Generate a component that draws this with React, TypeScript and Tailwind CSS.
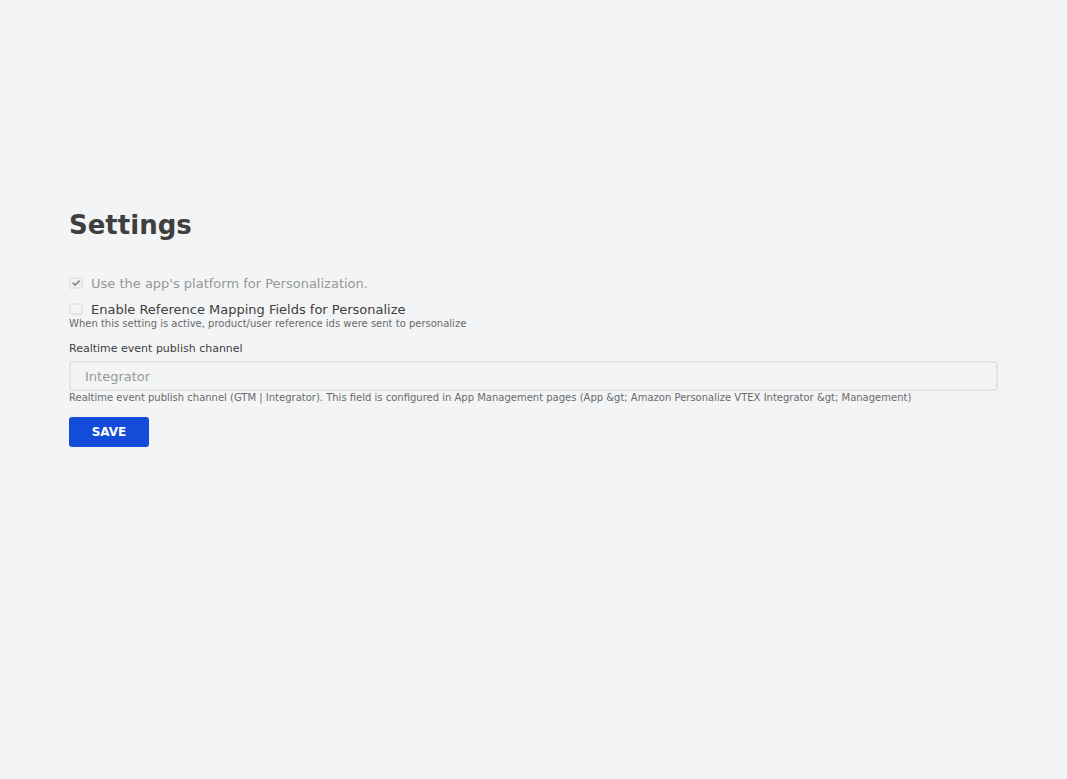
import { useState } from "react";

export default function App() {
  const [mapping, setMapping] = useState(false);
  return (
    <main className="min-h-screen bg-[#f2f4f5] px-[69px] pt-[205px] pb-16 font-['DejaVu_Sans',sans-serif] text-[#3f3f40]">
      <h1 className="text-[26px] leading-10 font-bold">Settings</h1>
      <form className="mt-8 flex flex-col items-start" onSubmit={(e) => e.preventDefault()}>
        <label className="flex h-[14px] items-start gap-2 text-[13px] leading-[14px] text-[#979899]">
          <span className="grid h-3 w-[14px]">
            <input type="checkbox" checked disabled readOnly className="col-start-1 row-start-1 h-3 w-[14px] appearance-none rounded-xs border-2 border-[#e3e4e6]" />
            <svg viewBox="0 0 14 12" className="col-start-1 row-start-1 h-3 w-[14px]" fill="none" stroke="#8b8c8d" strokeWidth="1.7"><path d="M3.6 5.7 L6 8 L10.7 3.7" /></svg>
          </span>
          Use the app's platform for Personalization.
        </label>
        <label className="mt-3 flex h-[14px] items-start gap-2 text-[13px] leading-[14px]">
          <input type="checkbox" checked={mapping} onChange={(e) => setMapping(e.target.checked)} className="h-3 w-[14px] appearance-none rounded-xs border-2 border-[#e3e4e6] checked:bg-[#134cd8]" />
          Enable Reference Mapping Fields for Personalize
        </label>
        <p className="text-[10px] leading-[14px] text-[#6a6a6b]">When this setting is active, product/user reference ids were sent to personalize</p>
        <label htmlFor="channel" className="mt-2.5 text-[11px] leading-4">Realtime event publish channel</label>
        <input id="channel" disabled value="Integrator" readOnly className="mt-1 h-[30px] w-full rounded-sm border-2 border-[#e3e4e6] px-[14px] text-[13px] text-[#979899]" />
        <p className="text-[10px] leading-[14px] text-[#6a6a6b]">{"Realtime event publish channel (GTM | Integrator). This field is configured in App Management pages (App &gt; Amazon Personalize VTEX Integrator &gt; Management)"}</p>
        <button type="submit" className="mt-3 h-[30px] w-20 rounded-[3px] bg-[#134cd8] text-xs font-bold text-white">SAVE</button>
      </form>
    </main>
  );
}
